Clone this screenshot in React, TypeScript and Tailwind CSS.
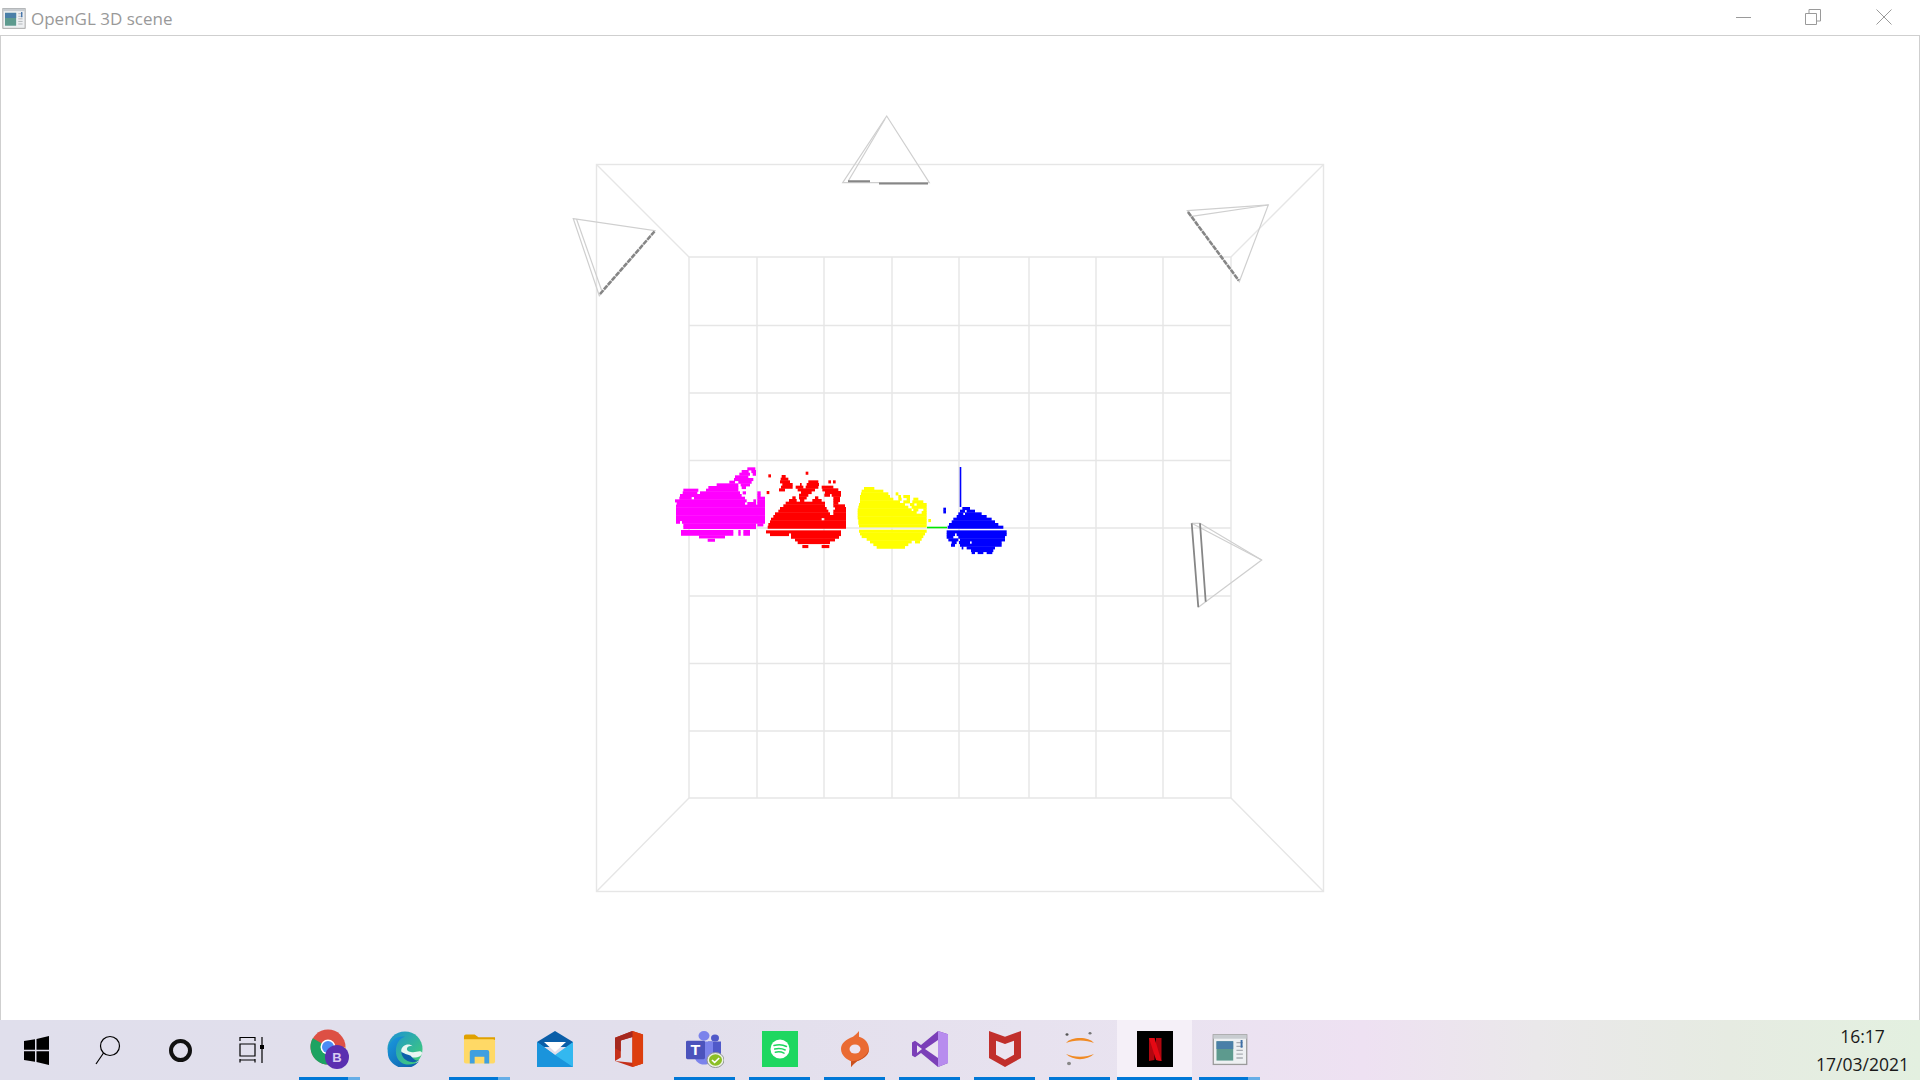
import React from 'react';

// rows of the point clouds, measured on 3x crops: [y, x1, x2, x1, x2, ...]
type Row = number[];

const magentaRows: Row[] = [
  [22, 232, 256], [30, 215, 236, 244, 258], [38, 208, 240, 248, 258], [46, 195, 235], [54, 192, 250],
  [62, 178, 195, 205, 245], [70, 140, 205, 212, 240], [78, 115, 205, 215, 228], [86, 40, 85, 108, 205],
  [94, 38, 82, 90, 210, 218, 228, 262, 272], [102, 30, 215, 262, 272], [110, 28, 65, 72, 225, 262, 285],
  [118, 15, 230, 250, 258, 262, 285], [126, 20, 225, 232, 258, 262, 285], [134, 18, 285], [142, 18, 285],
  [150, 18, 285], [158, 18, 285], [166, 18, 285], [174, 18, 285], [182, 18, 30, 36, 285], [190, 40, 258, 262, 280],
  [198, 40, 258], [210, 33, 190, 205, 212, 220, 240], [218, 33, 190, 205, 212, 220, 240], [226, 87, 165], [236, 113, 135],
];

const redRows: Row[] = [
  [20, 122, 130], [28, 10, 18], [30, 50, 62], [38, 47, 70], [46, 45, 75, 130, 160, 190, 198, 204, 212],
  [54, 52, 83, 105, 110, 125, 162], [62, 48, 83, 92, 115, 122, 160, 170, 205], [70, 42, 60, 98, 150, 172, 220],
  [78, 5, 13, 108, 140, 180, 228], [86, 102, 130, 178, 195, 200, 228], [94, 82, 92, 102, 125, 150, 160, 205, 225],
  [102, 72, 95, 105, 118, 142, 170, 205, 225], [110, 62, 180, 205, 220], [118, 55, 180, 205, 240], [126, 45, 185, 210, 243],
  [134, 40, 190, 205, 243], [142, 30, 195, 205, 243], [150, 25, 243], [158, 18, 170, 178, 243], [166, 15, 243],
  [174, 10, 243], [182, 8, 243], [196, 3, 228], [204, 15, 72, 78, 228], [212, 78, 222], [220, 90, 210], [228, 98, 195],
  [240, 112, 130, 170, 193],
];

const yellowRows: Row[] = [
  [66, 27, 58], [74, 20, 85], [82, 18, 100, 122, 130], [90, 15, 105, 130, 138, 145, 165],
  [98, 15, 115, 130, 140, 155, 165, 175, 190], [106, 15, 135, 145, 165, 172, 205], [114, 12, 150, 165, 178, 185, 215],
  [122, 10, 160, 170, 215], [130, 8, 170, 175, 190, 205, 215], [138, 8, 185, 200, 215], [146, 8, 215], [154, 8, 215],
  [162, 10, 215, 220, 228], [170, 10, 215], [178, 12, 215], [194, 12, 215], [202, 15, 210], [210, 20, 205],
  [218, 35, 200], [226, 45, 170, 180, 195], [234, 55, 160], [242, 65, 150],
];

const blueRows: Row[] = [
  [128, 265, 273], [136, 265, 273], [126, 322, 345], [134, 315, 330, 335, 360], [142, 310, 325, 330, 380], [150, 305, 395],
  [158, 295, 410], [166, 290, 420], [174, 282, 430], [182, 278, 445], [196, 275, 455], [204, 275, 300, 305, 455],
  [212, 275, 295, 310, 450], [220, 280, 310, 315, 450], [228, 290, 305, 312, 345, 350, 440], [236, 288, 300, 315, 440],
  [244, 320, 325, 335, 420], [252, 348, 415], [258, 350, 360, 368, 385, 395, 412],
];

const Cloud = ({ rows, fill, ox, oy }: { rows: Row[]; fill: string; ox: number; oy: number }) => (
  <g fill={fill}>
    {rows.flatMap((row, i) => {
      const spans = [];
      for (let s = 1; s < row.length; s += 2) {
        spans.push(
          <rect key={`${i}-${s}`} x={ox + row[s] / 3} y={oy + row[0] / 3} width={(row[s + 1] - row[s]) / 3} height={3.1} />
        );
      }
      return spans;
    })}
  </g>
);

const verticals = [689, 757, 824, 892, 959, 1029, 1096, 1163, 1231];
const horizontals = [257, 325.5, 393, 460.5, 528, 596, 663.5, 731, 798];

const Scene = () => (
  <svg viewBox="1 36 1918 984" className="w-full h-full block">
    <g stroke="#e6e6e6" strokeWidth="1.4" fill="none">
      <rect x="596.5" y="164.5" width="727" height="727" />
      <path d="M596.5 164.5 689 257M1323.5 164.5 1231 257M596.5 891.5 689 798M1323.5 891.5 1231 798" />
      {verticals.map(x => <path key={x} d={`M${x} 257V798`} />)}
      {horizontals.map(y => <path key={y} d={`M689 ${y}H1231`} />)}
    </g>

    {/* cameras */}
    <g fill="none" stroke="#cfcfcf" strokeWidth="1.2">
      <path d="M886.7 116 842.7 182.7H929.3Z" />
      <path d="M885 119 848.3 181" />
      <path d="M573.3 218.7 655 230.7 599.3 295.7Z" />
      <path d="M576.5 219 601.5 290" />
      <path d="M1187.3 210.7 1268.3 205 1239.3 281.7Z" />
      <path d="M1190 216.7 1268.3 205" />
      <path d="M1200 523.3 1261.7 560 1198.3 607.3" />
      <path d="M1191.7 523.3 1261.7 560" />
      <path d="M1191.7 523.3H1200" />
    </g>
    <g fill="none" stroke="#868686">
      <path d="M848 181.3H870M879 183.6H928" strokeWidth="2" />
      <path d="M600 294 654.5 231.5" strokeWidth="2.6" strokeDasharray="5 1" />
      <path d="M1188 212 1238.8 280.5" strokeWidth="2.6" strokeDasharray="5 1" />
      <path d="M1191.7 523.3 1198.3 607.3M1200 523.3 1205.7 601.7" strokeWidth="1.8" />
    </g>

    <Cloud rows={magentaRows} fill="#ff00ff" ox={670} oy={460} />
    <Cloud rows={redRows} fill="#ff0000" ox={765} oy={465} />
    <Cloud rows={yellowRows} fill="#ffff00" ox={855} oy={465} />
    <Cloud rows={blueRows} fill="#0000ff" ox={855} oy={465} />
    <path d="M927 527.5H947" stroke="#00e600" strokeWidth="1.6" />
    <path d="M960.5 467V507" stroke="#0000ff" strokeWidth="1.6" />
  </svg>
);

const GlWindowIcon = ({ size }: { size: number }) => (
  <svg width={size} height={size} viewBox="0 0 28 28">
    <rect x="1" y="3" width="26" height="23" fill="#eef0f2" stroke="#9a9a9a" />
    <rect x="1" y="3" width="26" height="3" fill="#c8ccd0" />
    <rect x="3.5" y="8" width="13" height="15" fill="#5d9a8e" />
    <rect x="3.5" y="8" width="13" height="6" fill="#4a7fa8" />
    <path d="M19 9h5M19 12h5M19 15h5M19 18h5M19 21h5" stroke="#a9adb2" />
    <path d="M23 7v6" stroke="#3d6fa8" strokeWidth="1.5" />
  </svg>
);

const Chrome = () => (
  <svg width="39" height="40" viewBox="0 0 39 40">
    <circle cx="18" cy="18" r="17.500" fill="#dd5044" />
    <path d="M18 18 2.800 9.300A17.500 17.500 0 0 0 18 35.500Z" fill="#1da362" />
    <path d="M18 18H35.500A17.500 17.500 0 0 1 18 35.500Z" fill="#ffcd40" />
    <circle cx="18" cy="18" r="7.500" fill="#fff" />
    <circle cx="18" cy="18" r="6" fill="#4b8bf5" />
    <circle cx="27" cy="28" r="12" fill="#5a2fb0" />
    <text x="27" y="33" textAnchor="middle" fontSize="13" fontWeight="700" fill="#d9ccf2" fontFamily="Liberation Sans, sans-serif">B</text>
  </svg>
);

const Edge = () => (
  <svg width="36" height="36" viewBox="0 3 38 38">
    <defs>
      <linearGradient id="edgeTop" x1="0" y1="0" x2="1" y2="1">
        <stop offset="0" stopColor="#1c8fd8" />
        <stop offset="1" stopColor="#45d46c" />
      </linearGradient>
      <linearGradient id="edgeLow" x1="0" y1="0" x2="1" y2="1">
        <stop offset="0" stopColor="#1a9be0" />
        <stop offset="1" stopColor="#0d5aa5" />
      </linearGradient>
    </defs>
    <circle cx="19" cy="22" r="18.5" fill="url(#edgeTop)" />
    <path d="M1 24C2 12 11 8 19 9c-8 2-11 12-9 20 2 8 12 13 24 6-6 7-15 9-22 6C5 38 0 32 1 24Z" fill="url(#edgeLow)" />
    <path d="M37 26c0 3-3 5-9 5-8 0-13-3-13-7 0-6 8-9 12-5-4-1-6 1-6 3 0 3 6 4 10 3 3-1 5-1 6 1Z" fill="#eaf6f2" />
    <path d="M15 24c0 6 4 11 12 12 3 0 5-1 7-2-5 1-7-3-9-5-5-2-10-3-10-5Z" fill="#0e5fab" />
  </svg>
);

const Explorer = () => (
  <svg width="33" height="32" viewBox="0 0 34 32">
    <path d="M1 3a2 2 0 0 1 2-2h9l4 3H33v3H1Z" fill="#e0a100" />
    <path d="M1 6H31a2 2 0 0 1 2 2V29a2 2 0 0 1-2 2H3a2 2 0 0 1-2-2Z" fill="#ffd966" />
    <path d="M7 31V19a2 2 0 0 1 2-2H25a2 2 0 0 1 2 2V31H22V24H12V31Z" fill="#3f9fe0" />
  </svg>
);

const Mail = () => (
  <svg width="36" height="36" viewBox="0 0 36 36">
    <path d="M18 0 36 11V16H0V11Z" fill="#0a5ea8" />
    <path d="M7 11H29L18 21Z" fill="#fff" />
    <path d="M0 11 18 24 36 11V36H0Z" fill="#33b8f0" />
    <path d="M0 36V11L18 24 36 36Z" fill="#1a94dc" />
  </svg>
);

const Office = () => (
  <svg width="29" height="36" viewBox="0 0 30 42" preserveAspectRatio="none">
    <path d="M0 8 18 0 29 4V38L18 42 0 35 18 37V7L6 11V31L0 35Z" fill="#c5301a" />
    <path d="M18 0 29 4V38L18 42Z" fill="#dd3e0e" />
    <path d="M0 8 18 0V7L6 11V24L0 20Z" fill="#a5281e" />
  </svg>
);

const Teams = () => (
  <svg width="38" height="37" viewBox="0 0 38 42" preserveAspectRatio="none">
    <circle cx="18" cy="5.5" r="5.5" fill="#7b83eb" />
    <circle cx="29" cy="8" r="4" fill="#5059c9" />
    <path d="M22 12H35V24C35 28 32 30 29 30H22Z" fill="#5059c9" />
    <path d="M9 12H27V30C27 36 22 38 18 38 13 38 9 34 9 30Z" fill="#7b83eb" />
    <rect x="0" y="11" width="19" height="21" rx="1.5" fill="#4b53bc" />
    <text x="9.5" y="27" textAnchor="middle" fontSize="16" fontWeight="700" fill="#fff" fontFamily="Liberation Sans, sans-serif">T</text>
    <circle cx="29.5" cy="33" r="8.5" fill="#eef2e6" stroke="#8c9290" strokeWidth="1" />
    <circle cx="29.5" cy="33" r="6.5" fill="#8cbf26" />
    <path d="M26 33l2.6 2.6 4.6-5" stroke="#fff" strokeWidth="1.6" fill="none" />
  </svg>
);

const Spotify = () => (
  <svg width="36" height="36" viewBox="0 0 36 36">
    <rect width="36" height="36" fill="#1ed760" />
    <circle cx="18" cy="18" r="9.5" fill="#fff" />
    <path d="M12 14.500c4-1 9-.8 12.500 1M12.700 18c3.500-.8 7.700-.5 10.500 1M13.300 21.200c3-.6 6.200-.4 8.700.9" stroke="#1ed760" strokeWidth="1.500" strokeLinecap="round" fill="none" />
  </svg>
);

const Origin = () => (
  <svg width="28" height="36" viewBox="0 0 28 44" preserveAspectRatio="none">
    <path d="M18 0C16 3 14 5 12 7 5 10 0 15 0 22c0 8 6 13 10 15v7c2-3 4-5 6-7 7-3 12-8 12-15 0-7-4-13-10-15 0-2 0-5 0-7Z" fill="#ea6b33" />
    <path d="M10 37c8 0 16-6 18-15 0 7-5 12-12 15-2 2-4 4-6 7Z" fill="#c9501e" />
    <circle cx="14" cy="22" r="5.5" fill="#ece4f1" />
  </svg>
);

const VisualStudio = () => (
  <svg width="36" height="36" viewBox="0 0 36 44" preserveAspectRatio="none">
    <path d="M26 0 36 4V39L26 44 9 27 3 32 0 30V14L3 12 9 17Z" fill="#7b3fb8" />
    <path d="M26 0 36 4V39L26 44Z" fill="#b78cee" />
    <path d="M26 11V33L13 22Z" fill="#ece4f1" />
    <path d="M5 17.5 10 22 5 27Z" fill="#ece4f1" />
  </svg>
);

const McAfee = () => (
  <svg width="32" height="36" viewBox="0 0 32 44" preserveAspectRatio="none">
    <path d="M0 0 16 7 32 0V33L16 44 0 33Z" fill="#c12f2c" />
    <path d="M7 12 16 16 25 12V29L16 35 7 29Z" fill="#ece4f1" />
  </svg>
);

const Eclipse = () => (
  <svg width="30" height="34" viewBox="0 0 30 40" preserveAspectRatio="none">
    <path d="M1 13C6 5 24 5 29 13 22 9 8 9 1 13Z" fill="#f08a24" />
    <path d="M1 26C8 34 22 34 29 26 22 30 8 30 1 26Z" fill="#f08a24" />
    <circle cx="2" cy="3" r="1.5" fill="#555" />
    <circle cx="25" cy="1.5" r="1.5" fill="#777" />
    <circle cx="4" cy="37" r="2" fill="#888" />
  </svg>
);

const Netflix = () => (
  <svg width="36" height="36" viewBox="0 0 36 36">
    <rect width="36" height="36" fill="#000" />
    <path d="M12 7H17.500V29L12 30Z" fill="#b1060f" />
    <path d="M19 7H24.500V30L19 29Z" fill="#b1060f" />
    <path d="M12 7H17.500L24.500 30 19 29Z" fill="#e50914" />
  </svg>
);

const WindowsLogo = () => (
  <svg width="25" height="29" viewBox="0 0 25 29" fill="#000">
    <path d="M0 5 11 3.200V13.700H0ZM12.500 3 25 0V13.700H12.500ZM0 15.200H11V25.800L0 24ZM12.500 15.200H25V29L12.500 26Z" />
  </svg>
);

type App = { icon: React.ReactNode; bar: 'full' | 'split' | 'none'; active?: boolean };

const apps: App[] = [
  { icon: <Chrome />, bar: 'split' },
  { icon: <Edge />, bar: 'none' },
  { icon: <Explorer />, bar: 'split' },
  { icon: <Mail />, bar: 'none' },
  { icon: <Office />, bar: 'none' },
  { icon: <Teams />, bar: 'full' },
  { icon: <Spotify />, bar: 'full' },
  { icon: <Origin />, bar: 'full' },
  { icon: <VisualStudio />, bar: 'full' },
  { icon: <McAfee />, bar: 'full' },
  { icon: <Eclipse />, bar: 'full' },
  { icon: <Netflix />, bar: 'full', active: true },
  { icon: <GlWindowIcon size={36} />, bar: 'split' },
];

const TaskButton = ({ icon, bar, active }: App) => (
  <div className={`relative h-full w-[75px] flex items-center justify-center pb-[2px] ${active ? 'bg-[#f5f0f8]' : ''}`}>
    {icon}
    {bar === 'full' && <div className={`absolute bottom-0 h-[3px] bg-[#0078d7] ${active ? 'inset-x-0' : 'inset-x-[7px]'}`} />}
    {bar === 'split' && (
      <div className="absolute bottom-0 inset-x-[7px] h-[3px] flex">
        <div className="flex-1 bg-[#0078d7]" />
        <div className="w-[12px] bg-[#66aee7]" />
      </div>
    )}
  </div>
);

export default function App() {
  return (
    <div className="w-screen h-screen overflow-hidden flex flex-col bg-white font-['Open_Sans',sans-serif]">
      <div className="h-[36px] shrink-0 flex items-center border-b border-[#cfcfcf]">
        <div className="pl-[2px] pr-[5px] flex items-center">
          <GlWindowIcon size={24} />
        </div>
        <span className="text-[17px] text-[#999999] leading-none pt-[1px]">OpenGL 3D scene</span>
        <div className="ml-auto flex h-full">
          <div className="w-[70px] flex items-center justify-center">
            <div className="w-[15px] h-px bg-[#9a9a9a]" />
          </div>
          <div className="w-[70px] pb-[2px] flex items-center justify-center">
            <svg width="16" height="16" viewBox="0 0 16 16" fill="none" stroke="#9a9a9a">
              <path d="M.5 4.500H11.500V15.500H.5ZM4 4.500V.5H15.500V12H11.500" />
            </svg>
          </div>
          <div className="w-[72px] pb-[2px] flex items-center justify-center">
            <svg width="16" height="16" viewBox="0 0 16 16" fill="none" stroke="#9a9a9a">
              <path d="M.5.5 15.500 15.500M15.500.5.5 15.500" />
            </svg>
          </div>
        </div>
      </div>

      <div className="flex-1 min-h-0 border-x border-[#cfcfcf]">
        <Scene />
      </div>

      <div className="h-[60px] shrink-0 flex items-center bg-[linear-gradient(90deg,#e0dfec_0%,#e2dfec_35%,#e9e3f0_60%,#eee1f2_71%,#eae8ea_80%,#e6ebe2_90%,#e3f0e0_100%)]">
        <div className="w-[72px] h-full flex items-center justify-center"><WindowsLogo /></div>
        <div className="w-[72px] h-full flex items-center justify-center">
          <svg width="26" height="30" viewBox="0 0 26 30" fill="none" stroke="#000" strokeWidth="1.200">
            <circle cx="15" cy="11" r="9.500" />
            <path d="M8.500 18 1 29" />
          </svg>
        </div>
        <div className="w-[72px] h-full flex items-center justify-center">
          <div className="w-[23px] h-[23px] rounded-full border-[4px] border-[#111111]" />
        </div>
        <div className="w-[72px] h-full flex items-center justify-center">
          <svg width="26" height="28" viewBox="0 0 26 28" fill="none" stroke="#000" strokeWidth="1.200">
            <path d="M1 5V1.500H16V5M1 23V26.500M16 23V26.500M1 24H16M1 8H16V20H1ZM23 1V27" />
            <rect x="21" y="9" width="4" height="4" fill="#000" stroke="none" />
          </svg>
        </div>
        <div className="w-[4px]" />
        {apps.map((app, i) => (
          <TaskButton key={i} {...app} />
        ))}
        <div className="ml-auto w-[113px] pr-[2px] flex flex-col items-center text-[17.5px] leading-[28px] text-[#1a1a1a]">
          <span>16:17</span>
          <span>17/03/2021</span>
        </div>
      </div>
    </div>
  );
}
